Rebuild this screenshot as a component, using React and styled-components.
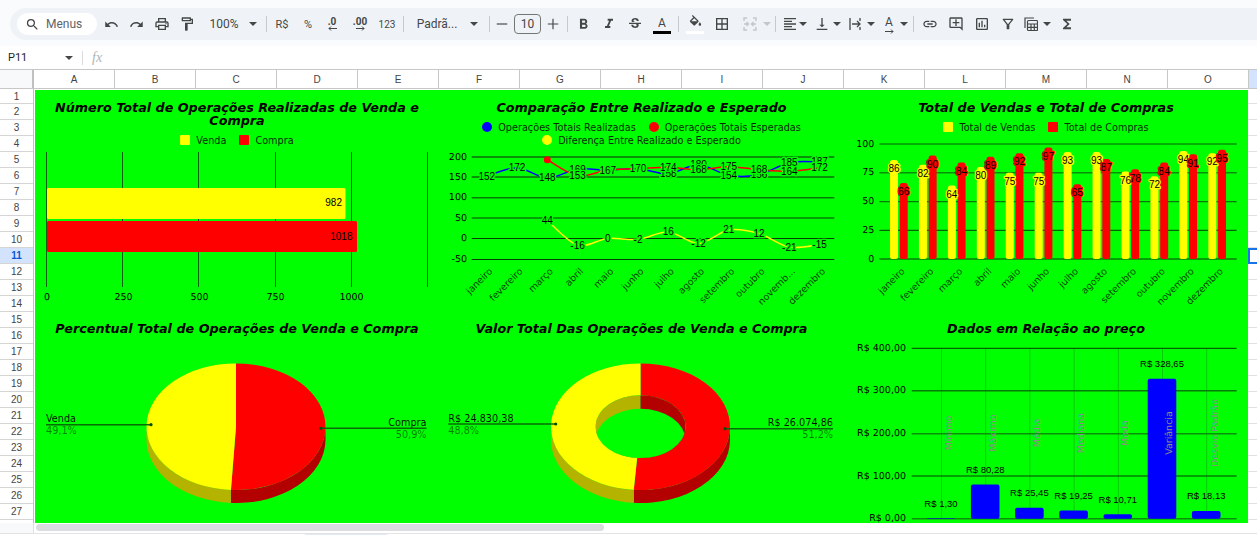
import React from 'react'
import styled, { createGlobalStyle } from 'styled-components'
import {
   MdSearch, MdUndo, MdRedo, MdOutlinePrint, MdOutlineFormatPaint, MdFormatBold, MdFormatItalic,
   MdStrikethroughS, MdBorderAll, MdFormatAlignLeft, MdVerticalAlignBottom, MdLink,
   MdOutlineAddComment, MdOutlineInsertChart, MdOutlineFilterAlt, MdFunctions,
} from 'react-icons/md'

const CHART_FONT = '"DejaVu Sans", Verdana, sans-serif'
const LABEL_FONT = '"Liberation Sans", Arial, sans-serif'
const UI_FONT = 'Roboto, "Liberation Sans", Arial, sans-serif'
const ICON = '#444746'
const GREEN = '#00ff00'
const YELLOW = '#ffff00'
const RED = '#ff0000'
const BLUE = '#0000ff'

const GlobalStyle = createGlobalStyle`
   html, body {
      margin: 0;
      padding: 0;
      background: #fff;
      overflow: hidden;
   }
   * {
      box-sizing: border-box;
   }
`

const Page = styled.div`
   width: 1257px;
   height: 535px;
   overflow: hidden;
   font-family: ${UI_FONT};
   background: #fff;
`

/* ---------- toolbar ---------- */

const TopBar = styled.div`
   height: 46px;
   padding: 8px 0 0 10px;
   background: #f9fbfd;
`

const Toolbar = styled.div`
   display: flex;
   align-items: center;
   height: 32px;
   padding-left: 7px;
   background: #eff3f8;
   border-radius: 16px 0 0 16px;
   color: ${ICON};
`

const SearchPill = styled.div`
   display: flex;
   align-items: center;
   gap: 6px;
   width: 80px;
   height: 22px;
   padding-left: 8px;
   background: #fff;
   border-radius: 11px;
   font-size: 12px;
   color: #5f6368;

   svg {
      color: ${ICON};
   }
`

const Tool = styled.div`
   display: flex;
   flex: none;
   flex-direction: column;
   align-items: center;
   justify-content: center;
   width: ${p => p.$w || 20}px;
   height: 22px;
   margin-left: ${p => p.$ml || 0}px;
   font-size: ${p => p.$size || 12}px;
   color: ${p => p.$muted ? '#c4c7c5' : ICON};
   white-space: nowrap;
`

const Sep = styled.div`
   flex: none;
   width: 1px;
   height: 16px;
   margin-left: ${p => p.$ml}px;
   background: #c7c9cc;
`

const Caret = styled.div`
   flex: none;
   width: 0;
   height: 0;
   margin-left: ${p => p.$ml || 0}px;
   margin-right: ${p => p.$mr || 0}px;
   border-left: 4px solid transparent;
   border-right: 4px solid transparent;
   border-top: 4px solid ${p => p.$muted ? '#c4c7c5' : ICON};
`

const SizeBox = styled.div`
   display: flex;
   flex: none;
   align-items: center;
   justify-content: center;
   width: 27px;
   height: 20px;
   margin-left: 6px;
   border: 1px solid #747775;
   border-radius: 4px;
   font-size: 12px;
   color: ${ICON};
`

const ColorLetter = styled.span`
   font-size: 12px;
   line-height: 13px;
   margin-top: 2px;
`

const ColorBar = styled.div`
   width: 18px;
   height: 3px;
   margin-top: 1px;
   background: ${p => p.$color};
`

const DecimalText = styled.span`
   font-size: 10px;
   font-weight: 700;
   line-height: 9px;
`

const Icon24 = ({ children, size = 16 }) => (
   <svg width={size} height={size} viewBox="0 0 24 24" fill="currentColor">{children}</svg>
)

const SmallArrow = ({ left }) => (
   <svg width="9" height="5" viewBox="0 0 9 5" fill="none" stroke="currentColor" strokeWidth="1">
      {left
         ? <path d="M9 2.5H1M3 .5L1 2.5l2 2" />
         : <path d="M0 2.5h8M6 .5l2 2-2 2" />}
   </svg>
)

/* ---------- name box / formula bar ---------- */

const FormulaBar = styled.div`
   display: flex;
   align-items: center;
   height: 23px;
   padding-left: 8px;
   background: #fff;
   font-size: 11px;
   color: #1f1f1f;
`

const CellName = styled.div`
   width: 57px;
`

const FormulaDivider = styled.div`
   width: 1px;
   height: 14px;
   margin-left: 9px;
   background: #dadce0;
`

const FxLabel = styled.span`
   margin-left: 9px;
   font-family: "Liberation Serif", serif;
   font-style: italic;
   font-size: 14px;
   color: #b0b3b6;
`

/* ---------- grid headers ---------- */

const ColumnHeaders = styled.div`
   display: flex;
   height: 20px;
   border-top: 1px solid #c7c7c7;
   border-bottom: 1px solid #c7c7c7;
`

const Corner = styled.div`
   width: 34px;
   background: #f8f9fa;
   border-right: 2px solid #c0c0c0;
`

const ColumnCell = styled.div`
   display: flex;
   align-items: center;
   justify-content: center;
   width: 81px;
   border-right: 1px solid #c7c7c7;
   font-family: ${LABEL_FONT};
   font-size: 10px;
   color: #444;
`

const ColumnFiller = styled.div`
   flex: 1;
   background: #d3e3fd;
`

const SheetBody = styled.div`
   display: flex;
   height: 434px;
   overflow: hidden;
`

const RowHeaders = styled.div`
   flex: none;
   width: 34px;
   border-right: 1px solid #c0c0c0;
`

const RowCell = styled.div`
   display: flex;
   align-items: center;
   justify-content: center;
   height: ${p => p.$first ? 15 : 16}px;
   border-bottom: 1px solid #d5d5d5;
   font-family: ${LABEL_FONT};
   font-size: 10px;
   font-weight: ${p => p.$active ? 700 : 400};
   color: ${p => p.$active ? '#0b57d0' : '#444'};
   background: ${p => p.$active ? '#d3e3fd' : '#fff'};
`

const RightCells = styled.div`
   flex: 1;
`

const RightCell = styled.div`
   height: ${p => p.$first ? 15 : 16}px;
   border-bottom: 1px solid #e1e1e1;
   border: ${p => p.$active ? '2px solid #1a73e8' : undefined};
   border-right: ${p => p.$active ? 'none' : undefined};
`

/* ---------- dashboard ---------- */

const Dashboard = styled.div`
   display: grid;
   flex: none;
   grid-template-columns: 404px 405px 404px;
   grid-template-rows: 221px 212px;
   width: 1213px;
   height: 433px;
   margin: 1px 0 0 1px;
   background: ${GREEN};
`

const Panel = styled.section`
   display: flex;
   flex-direction: column;
   overflow: hidden;
`

const PanelHeader = styled.header`
   flex: none;
   height: ${p => p.$h}px;
   padding: 11px 14px 0;
`

const PanelTitle = styled.h2`
   margin: 0 0 6.5px;
   font-family: ${CHART_FONT};
   font-size: 12.75px;
   font-weight: 700;
   font-style: italic;
   line-height: 13px;
   text-align: center;
   color: #000;
`

const Legend = styled.div`
   display: flex;
   flex-wrap: wrap;
   justify-content: center;
   column-gap: 13px;
`

const LegendItem = styled.div`
   display: flex;
   align-items: center;
   gap: 6px;
   height: 13px;
   font-family: ${CHART_FONT};
   font-size: 9.7px;
   color: #032b03;
`

const LegendMark = styled.span`
   width: 10px;
   height: 10px;
   background: ${p => p.$color};
   border-radius: ${p => p.$round ? '50%' : '1px'};
`

const Plot = styled.svg`
   display: block;
   flex: 1;
   width: 100%;
   min-height: 0;
`

const AxisText = styled.text`
   font-family: ${CHART_FONT};
   font-size: 9.5px;
   fill: #000;
   fill-opacity: ${p => p.$dim ? 0.78 : 1};
   dominant-baseline: central;
   text-rendering: geometricPrecision;
`

const DataLabel = styled.text`
   font-family: ${LABEL_FONT};
   font-size: ${p => p.$size || 10}px;
   fill: #000;
   dominant-baseline: central;
   paint-order: stroke;
   stroke: ${p => p.$halo || 'none'};
   stroke-width: ${p => p.$halo ? 2.6 : 0}px;
   stroke-linejoin: round;
`

const SliceLabel = styled.text`
   font-family: ${CHART_FONT};
   font-size: 9.7px;
   fill: #000;
   fill-opacity: ${p => p.$dim ? 0.52 : 0.95};
   dominant-baseline: central;
`

const CategoryLabel = styled.text`
   font-family: ${CHART_FONT};
   font-size: 9.5px;
   fill: #8c8c8c;
   dominant-baseline: central;
   text-rendering: geometricPrecision;
`

/* ---------- bottom ---------- */

const ScrollRow = styled.div`
   display: flex;
   height: 10px;
`

const ScrollCorner = styled.div`
   width: 34px;
   background: #f8f9fa;
   border-right: 1px solid #e0e0e0;
`

const ScrollThumb = styled.div`
   width: 568px;
   height: 7px;
   margin: 1px 0 0 2px;
   background: #dadce0;
   border-radius: 4px;
`

const TabStrip = styled.div`
   display: flex;
   height: 2px;
   padding-left: 305px;
   border-top: 1px solid #e3e3e3;
`

const ActiveTab = styled.div`
   width: 82px;
   height: 1px;
   background: #e1e9f7;
`

/* ---------- chart data ---------- */

const MONTHS = ['janeiro', 'fevereiro', 'março', 'abril', 'maio', 'junho', 'julho', 'agosto', 'setembro', 'outubro', 'novembro', 'dezembro']

const REALIZED = [152, 172, 148, 169, 167, 170, 158, 180, 154, 156, 185, 187]
const EXPECTED = [null, null, 192, 153, 167, 170, 174, 168, 175, 168, 164, 172]
const DIFFERENCE = [null, null, 44, -16, 0, -2, 16, -12, 21, 12, -21, -15]

const SALES = [86, 82, 64, 80, 75, 75, 93, 93, 76, 72, 94, 92]
const PURCHASES = [66, 90, 84, 89, 92, 97, 65, 87, 78, 84, 91, 95]

const PRICE_DATA = [
   { name: 'Mínimo', value: 1.3, text: 'R$ 1,30', nameX: 949 },
   { name: 'Máximo', value: 80.28, text: 'R$ 80,28', nameX: 993 },
   { name: 'Média', value: 25.45, text: 'R$ 25,45', nameX: 1037.5 },
   { name: 'Mediana', value: 19.25, text: 'R$ 19,25', nameX: 1081.5 },
   { name: 'Moda', value: 10.71, text: 'R$ 10,71', nameX: 1125.5 },
   { name: 'Variância', value: 328.65, text: 'R$ 328,65', nameX: 1169.5 },
   { name: 'Desvio Padrão', value: 18.13, text: 'R$ 18,13', nameX: 1215.5 },
]

const GRID_SOFT = '#0a8f0a'
const GRID_HARD = '#063f06'

const smoothPath = (points) => {
   let d = `M${points[0][0]} ${points[0][1]}`
   for (let i = 0; i < points.length - 1; i++) {
      const p0 = points[i - 1] || points[i]
      const p1 = points[i]
      const p2 = points[i + 1]
      const p3 = points[i + 2] || p2
      const c1 = [p1[0] + (p2[0] - p0[0]) / 6, p1[1] + (p2[1] - p0[1]) / 6]
      const c2 = [p2[0] - (p3[0] - p1[0]) / 6, p2[1] - (p3[1] - p1[1]) / 6]
      d += `C${c1[0]} ${c1[1]} ${c2[0]} ${c2[1]} ${p2[0]} ${p2[1]}`
   }
   return d
}

/* ---------- charts ---------- */

const TotalsChart = () => (
   <Plot viewBox="35 150 404 161">
      {[46.5, 122.5, 198.5, 275.5, 351.5, 427.5].map(x => (
         <line key={x} x1={x} x2={x} y1="152" y2="287" stroke="#075f07" strokeWidth="1" />
      ))}
      <rect x="47" y="188" width="298.5" height="31" rx="1.5" fill={YELLOW} />
      <rect x="47" y="221" width="310" height="31" rx="1.5" fill={RED} />
      <DataLabel x="342" y="202.5" textAnchor="end">982</DataLabel>
      <DataLabel x="352.5" y="236" textAnchor="end">1018</DataLabel>
      {[['0', 47], ['250', 123.5], ['500', 199.5], ['750', 275.5], ['1000', 351.5]].map(([t, x]) => (
         <AxisText key={t} x={x} y="297" textAnchor="middle">{t}</AxisText>
      ))}
   </Plot>
)

const monthX = i => 486.8 + 30.25 * i
const compareY = v => 238.5 - v * 0.41

const CompareChart = () => {
   const series = [
      { values: REALIZED, color: BLUE },
      { values: EXPECTED, color: RED },
      { values: DIFFERENCE, color: YELLOW },
   ]
   const grid = [
      [200, 157, 2, GRID_SOFT], [150, 177, 2, GRID_SOFT], [100, 197.7, 1.5, '#087a08'],
      [50, 218, 1, GRID_HARD], [0, 238.5, 1, GRID_HARD], [-50, 259.5, 1, GRID_HARD],
   ]
   const labels = MONTHS.map(m => m === 'novembro' ? 'novemb...' : m)
   return (
      <Plot viewBox="439 150 405 161">
         {grid.map(([v, y, w, c]) => (
            <g key={v}>
               <line x1="471.7" x2="834.3" y1={y} y2={y} stroke={c} strokeWidth={w} />
               <AxisText x="467" y={y} textAnchor="end">{v}</AxisText>
            </g>
         ))}
         {series.map(({ values, color }) => {
            const pts = values.map((v, i) => v === null ? null : [monthX(i), compareY(v)]).filter(Boolean)
            return <path key={color} d={smoothPath(pts)} fill="none" stroke={color} strokeWidth="1.5" />
         })}
         <circle cx={monthX(2)} cy={compareY(192)} r="3.5" fill={RED} />
         {series.map(({ values, color }) => values.map((v, i) => (
            v === null || (color === RED && i === 2) ? null : (
               <DataLabel key={color + i} x={monthX(i)} y={compareY(v)} textAnchor="middle" $halo={GREEN}>{v}</DataLabel>
            )
         )))}
         {labels.map((m, i) => (
            <AxisText key={m} $dim textAnchor="end" transform={`translate(${monthX(i) + 4.5} 270) rotate(-45)`}>{m}</AxisText>
         ))}
      </Plot>
   )
}

const salesY = v => 259 - v * 1.15
const groupX = i => 890 + 28.94 * i

const SalesChart = () => (
   <Plot viewBox="844 140 404 171">
      {[[100, 144, 1, '#075f07'], [75, 172.7, 1.6, GRID_SOFT], [50, 201.7, 1.2, '#087a08'], [25, 230.3, 1, GRID_HARD], [0, 259, 1, GRID_HARD]].map(([v, y, w, c]) => (
         <g key={v}>
            <line x1="879.3" x2="1236.7" y1={y} y2={y} stroke={c} strokeWidth={w} />
            <AxisText x="874.3" y={y} textAnchor="end">{v}</AxisText>
         </g>
      ))}
      {MONTHS.map((m, i) => (
         <g key={m}>
            <rect x={groupX(i)} y={salesY(SALES[i])} width="8" height={SALES[i] * 1.15} rx="2.5" fill={YELLOW} />
            <rect x={groupX(i) + 9.7} y={salesY(PURCHASES[i])} width="8" height={PURCHASES[i] * 1.15} rx="2.5" fill={RED} />
         </g>
      ))}
      {MONTHS.map((m, i) => (
         <g key={m}>
            <DataLabel x={groupX(i) + 4} y={salesY(SALES[i]) + 8.7} textAnchor="middle" $halo={YELLOW}>{SALES[i]}</DataLabel>
            <DataLabel x={groupX(i) + 13.7} y={salesY(PURCHASES[i]) + 8.7} textAnchor="middle" $halo={RED}>{PURCHASES[i]}</DataLabel>
            <AxisText $dim textAnchor="end" transform={`translate(${groupX(i) + 13.5} 270) rotate(-45)`}>{m}</AxisText>
         </g>
      ))}
   </Plot>
)

const RX = 89.5
const RY = 63.3
const DEPTH = 13
const rim = (cx, cy, a, rx = RX, ry = RY) => {
   const rad = a * Math.PI / 180
   return [cx + rx * Math.sin(rad), cy - ry * Math.cos(rad)]
}

const sidePath = (cx, cy, from, to) => {
   const a = rim(cx, cy, from)
   const b = rim(cx, cy, to)
   return `M${a[0]} ${a[1]}A${RX} ${RY} 0 0 1 ${b[0]} ${b[1]}L${b[0]} ${b[1] + DEPTH}A${RX} ${RY} 0 0 0 ${a[0]} ${a[1] + DEPTH}Z`
}

const piePath = (cx, cy, from, to) => {
   const a = rim(cx, cy, from)
   const b = rim(cx, cy, to)
   return `M${cx} ${cy}L${a[0]} ${a[1]}A${RX} ${RY} 0 ${to - from > 180 ? 1 : 0} 1 ${b[0]} ${b[1]}Z`
}

const ringPath = (cx, cy, from, to, irx, iry) => {
   const a = rim(cx, cy, from)
   const b = rim(cx, cy, to)
   const c = rim(cx, cy, to, irx, iry)
   const d = rim(cx, cy, from, irx, iry)
   const large = to - from > 180 ? 1 : 0
   return `M${a[0]} ${a[1]}A${RX} ${RY} 0 ${large} 1 ${b[0]} ${b[1]}L${c[0]} ${c[1]}A${irx} ${iry} 0 ${large} 0 ${d[0]} ${d[1]}Z`
}

const Leader = ({ x1, x2, y, dotX }) => (
   <g>
      <line x1={x1} x2={x2} y1={y} y2={y} stroke="#086b08" strokeWidth="1.4" />
      <circle cx={dotX} cy={y} r="1.6" fill="#064f06" />
   </g>
)

const SharePie = () => {
   const cx = 236
   const cy = 426.7
   return (
      <Plot viewBox="35 341 404 182">
         <path d={sidePath(cx, cy, 90, 183.24)} fill="#b30000" />
         <path d={sidePath(cx, cy, 183.24, 270)} fill="#b3b300" />
         <path d={piePath(cx, cy, 0, 183.24)} fill={RED} />
         <path d={piePath(cx, cy, 183.24, 360)} fill={YELLOW} />
         <Leader x1={46} x2={151} y={424.7} dotX={151} />
         <SliceLabel x="46" y="418">Venda</SliceLabel>
         <SliceLabel x="46" y="430.5" $dim>49,1%</SliceLabel>
         <Leader x1={321} x2={426.5} y={428.3} dotX={321} />
         <SliceLabel x="426.5" y="422" textAnchor="end">Compra</SliceLabel>
         <SliceLabel x="426.5" y="434.5" textAnchor="end" $dim>50,9%</SliceLabel>
      </Plot>
   )
}

const ValueDonut = () => {
   const cx = 640.5
   const cy = 426.7
   const irx = 45
   const iry = 31.4
   const split = 184.3
   return (
      <Plot viewBox="439 341 405 182">
         <defs>
            <clipPath id="donut-hole">
               <ellipse cx={cx} cy={cy} rx={irx} ry={iry} />
            </clipPath>
         </defs>
         <path d={sidePath(cx, cy, 90, split)} fill="#b30000" />
         <path d={sidePath(cx, cy, split, 270)} fill="#b3b300" />
         <path d={ringPath(cx, cy, 0, split, irx, iry)} fill={RED} />
         <path d={ringPath(cx, cy, split, 360, irx, iry)} fill={YELLOW} />
         <g clipPath="url(#donut-hole)">
            <rect x={cx - irx} y={cy - iry} width={irx} height={iry * 2} fill="#b3b300" />
            <rect x={cx} y={cy - iry} width={irx} height={iry * 2} fill="#b30000" />
            <ellipse cx={cx} cy={cy + DEPTH + 0.5} rx={irx} ry={iry} fill={GREEN} />
         </g>
         <Leader x1={448.3} x2={555.7} y={424} dotX={555.7} />
         <SliceLabel x="448.3" y="418">R$ 24.830,38</SliceLabel>
         <SliceLabel x="448.3" y="430.5" $dim>48,8%</SliceLabel>
         <Leader x1={725} x2={833} y={428.7} dotX={725} />
         <SliceLabel x="833" y="422" textAnchor="end">R$ 26.074,86</SliceLabel>
         <SliceLabel x="833" y="434.5" textAnchor="end" $dim>51,2%</SliceLabel>
      </Plot>
   )
}

const priceY = v => 518.7 - v * 0.426
const priceX = i => 941 + 44.2 * i

const PriceChart = () => (
   <Plot viewBox="844 341 404 182">
      {PRICE_DATA.map((d, i) => (
         <line key={d.name} x1={priceX(i) + 0.5} x2={priceX(i) + 0.5} y1="348" y2="518" stroke="#0ccb0c" strokeWidth="1" />
      ))}
      {[[400, 348.3, 1, GRID_HARD], [300, 390.7, 1.5, '#087a08'], [200, 433.7, 1.5, GRID_SOFT], [100, 476, 1, GRID_HARD], [0, 518.7, 1.6, GRID_SOFT]].map(([v, y, w, c]) => (
         <g key={v}>
            <line x1="911.7" x2="1236.7" y1={y} y2={y} stroke={c} strokeWidth={w} />
            <AxisText x="906" y={y} textAnchor="end">{`R$ ${v},00`}</AxisText>
         </g>
      ))}
      {PRICE_DATA.map((d, i) => (
         <g key={d.name}>
            <rect x={priceX(i) - 14.3} y={priceY(d.value)} width="28.6" height={d.value * 0.426} rx="2" fill={BLUE} />
            <DataLabel x={priceX(i)} y={priceY(d.value) - 15} textAnchor="middle" $size={9.5}>{d.text}</DataLabel>
            <CategoryLabel textAnchor="middle" transform={`translate(${d.nameX} 433) rotate(-90)`}>{d.name}</CategoryLabel>
         </g>
      ))}
   </Plot>
)

const LegendEntry = ({ color, round, children }) => (
   <LegendItem>
      <LegendMark $color={color} $round={round} />
      {children}
   </LegendItem>
)

const COLUMNS = 'ABCDEFGHIJKLMNO'.split('')
const ROWS = Array.from({ length: 27 }, (_, i) => i + 1)

const App = () => (
   <Page>
      <GlobalStyle />
      <TopBar>
         <Toolbar>
            <SearchPill><MdSearch size={15} />Menus</SearchPill>
            <Tool $ml={4}><MdUndo size={15} /></Tool>
            <Tool $ml={5}><MdRedo size={15} /></Tool>
            <Tool $ml={6}><MdOutlinePrint size={16} /></Tool>
            <Tool $ml={5}><MdOutlineFormatPaint size={16} /></Tool>
            <Tool $ml={12} $w={30}>100%</Tool>
            <Caret $ml={10} />
            <Sep $ml={9} />
            <Tool $ml={5} $size={11}>R$</Tool>
            <Tool $ml={6} $size={11}>%</Tool>
            <Tool $ml={4}><DecimalText>.0</DecimalText><SmallArrow left /></Tool>
            <Tool $ml={8}><DecimalText>.00</DecimalText><SmallArrow /></Tool>
            <Tool $ml={7} $size={10}>123</Tool>
            <Sep $ml={6} />
            <Tool $ml={12} $w={42}>Padrã...</Tool>
            <Caret $ml={12} />
            <Sep $ml={11} />
            <Tool $ml={6} $w={12}>
               <Icon24 size={14}><path d="M3 11h18v2H3z" /></Icon24>
            </Tool>
            <SizeBox>10</SizeBox>
            <Tool $ml={6} $w={12}>
               <Icon24 size={14}><path d="M11 3h2v8h8v2h-8v8h-2v-8H3v-2h8z" /></Icon24>
            </Tool>
            <Sep $ml={8} />
            <Tool $ml={5}><MdFormatBold size={17} /></Tool>
            <Tool $ml={5.5}><MdFormatItalic size={16} /></Tool>
            <Tool $ml={6.5}><MdStrikethroughS size={16} /></Tool>
            <Tool $ml={7}><ColorLetter>A</ColorLetter><ColorBar $color="#000" /></Tool>
            <Sep $ml={6} />
            <Tool $ml={6}>
               <Icon24 size={15}>
                  <path d="M16.56 8.94L7.62 0 6.21 1.41l2.38 2.38-5.15 5.15c-.59.59-.59 1.54 0 2.12l5.5 5.5c.29.29.68.44 1.06.44s.77-.15 1.06-.44l5.5-5.5c.59-.58.59-1.53 0-2.12zM5.21 10L10 5.21 14.79 10H5.21zM19 11.5s-2 2.17-2 3.5c0 1.1.9 2 2 2s2-.9 2-2c0-1.33-2-3.5-2-3.5z" />
               </Icon24>
               <ColorBar $color="#fff" />
            </Tool>
            <Tool $ml={7}><MdBorderAll size={16} /></Tool>
            <Tool $ml={8} $muted>
               <svg width="14" height="14" viewBox="0 0 14 14" fill="none" stroke="currentColor" strokeWidth="1.4">
                  <path d="M1 4V1h3M1 10v3h3M13 4V1h-3M13 10v3h-3M1 7h4M3.5 5L5.5 7l-2 2M13 7H9M10.500 5L8.500 7l2 2" />
               </svg>
            </Tool>
            <Caret $ml={3} $muted />
            <Sep $ml={4} />
            <Tool $ml={5} $w={18}><MdFormatAlignLeft size={16} /></Tool>
            <Caret />
            <Tool $ml={6} $w={18}><MdVerticalAlignBottom size={16} /></Tool>
            <Caret $ml={2} />
            <Tool $ml={5} $w={18}>
               <svg width="14" height="14" viewBox="0 0 14 14" fill="none" stroke="currentColor" strokeWidth="1.3">
                  <path d="M2 1v12M12 1v3M12 10v3M4 7h8M9 4l3 3-3 3" />
               </svg>
            </Tool>
            <Caret $ml={3} />
            <Tool $ml={5} $w={18}><ColorLetter>A</ColorLetter><SmallArrow /></Tool>
            <Caret $ml={2} />
            <Sep $ml={5} />
            <Tool $ml={6}><MdLink size={16} /></Tool>
            <Tool $ml={6}><MdOutlineAddComment size={16} /></Tool>
            <Tool $ml={6}><MdOutlineInsertChart size={16} /></Tool>
            <Tool $ml={5.5}><MdOutlineFilterAlt size={16} /></Tool>
            <Tool $ml={3.5}>
               <svg width="14" height="15" viewBox="0 0 14 15" fill="none" stroke="currentColor" strokeWidth="1.2">
                  <path d="M1 11V1h9" />
                  <rect x="3.500" y="3.500" width="10" height="10" rx="1" />
                  <path d="M3.500 7h10M3.500 10.300h10M7 7v6.500M10.300 7v6.500" />
               </svg>
            </Tool>
            <Caret $ml={2} />
            <Tool $ml={6}><MdFunctions size={16} /></Tool>
         </Toolbar>
      </TopBar>

      <FormulaBar>
         <CellName>P11</CellName>
         <Caret />
         <FormulaDivider />
         <FxLabel>fx</FxLabel>
      </FormulaBar>

      <ColumnHeaders>
         <Corner />
         {COLUMNS.map(c => <ColumnCell key={c}>{c}</ColumnCell>)}
         <ColumnFiller />
      </ColumnHeaders>

      <SheetBody>
         <RowHeaders>
            {ROWS.map(r => <RowCell key={r} $first={r === 1} $active={r === 11}>{r}</RowCell>)}
         </RowHeaders>
         <Dashboard>
            <Panel>
               <PanelHeader $h={60}>
                  <PanelTitle>Número Total de Operações Realizadas de Venda e Compra</PanelTitle>
                  <Legend>
                     <LegendEntry color={YELLOW}>Venda</LegendEntry>
                     <LegendEntry color={RED}>Compra</LegendEntry>
                  </Legend>
               </PanelHeader>
               <TotalsChart />
            </Panel>
            <Panel>
               <PanelHeader $h={60}>
                  <PanelTitle>Comparação Entre Realizado e Esperado</PanelTitle>
                  <Legend>
                     <LegendEntry color={BLUE} round>Operações Totais Realizadas</LegendEntry>
                     <LegendEntry color={RED} round>Operações Totais Esperadas</LegendEntry>
                     <LegendEntry color={YELLOW} round>Diferença Entre Realizado e Esperado</LegendEntry>
                  </Legend>
               </PanelHeader>
               <CompareChart />
            </Panel>
            <Panel>
               <PanelHeader $h={50}>
                  <PanelTitle>Total de Vendas e Total de Compras</PanelTitle>
                  <Legend>
                     <LegendEntry color={YELLOW}>Total de Vendas</LegendEntry>
                     <LegendEntry color={RED}>Total de Compras</LegendEntry>
                  </Legend>
               </PanelHeader>
               <SalesChart />
            </Panel>
            <Panel>
               <PanelHeader $h={30}>
                  <PanelTitle>Percentual Total de Operações de Venda e Compra</PanelTitle>
               </PanelHeader>
               <SharePie />
            </Panel>
            <Panel>
               <PanelHeader $h={30}>
                  <PanelTitle>Valor Total Das Operações de Venda e Compra</PanelTitle>
               </PanelHeader>
               <ValueDonut />
            </Panel>
            <Panel>
               <PanelHeader $h={30}>
                  <PanelTitle>Dados em Relação ao preço</PanelTitle>
               </PanelHeader>
               <PriceChart />
            </Panel>
         </Dashboard>
         <RightCells>
            {ROWS.map(r => <RightCell key={r} $first={r === 1} $active={r === 11} />)}
         </RightCells>
      </SheetBody>

      <ScrollRow>
         <ScrollCorner />
         <ScrollThumb />
      </ScrollRow>
      <TabStrip><ActiveTab /></TabStrip>
   </Page>
)

export default App
